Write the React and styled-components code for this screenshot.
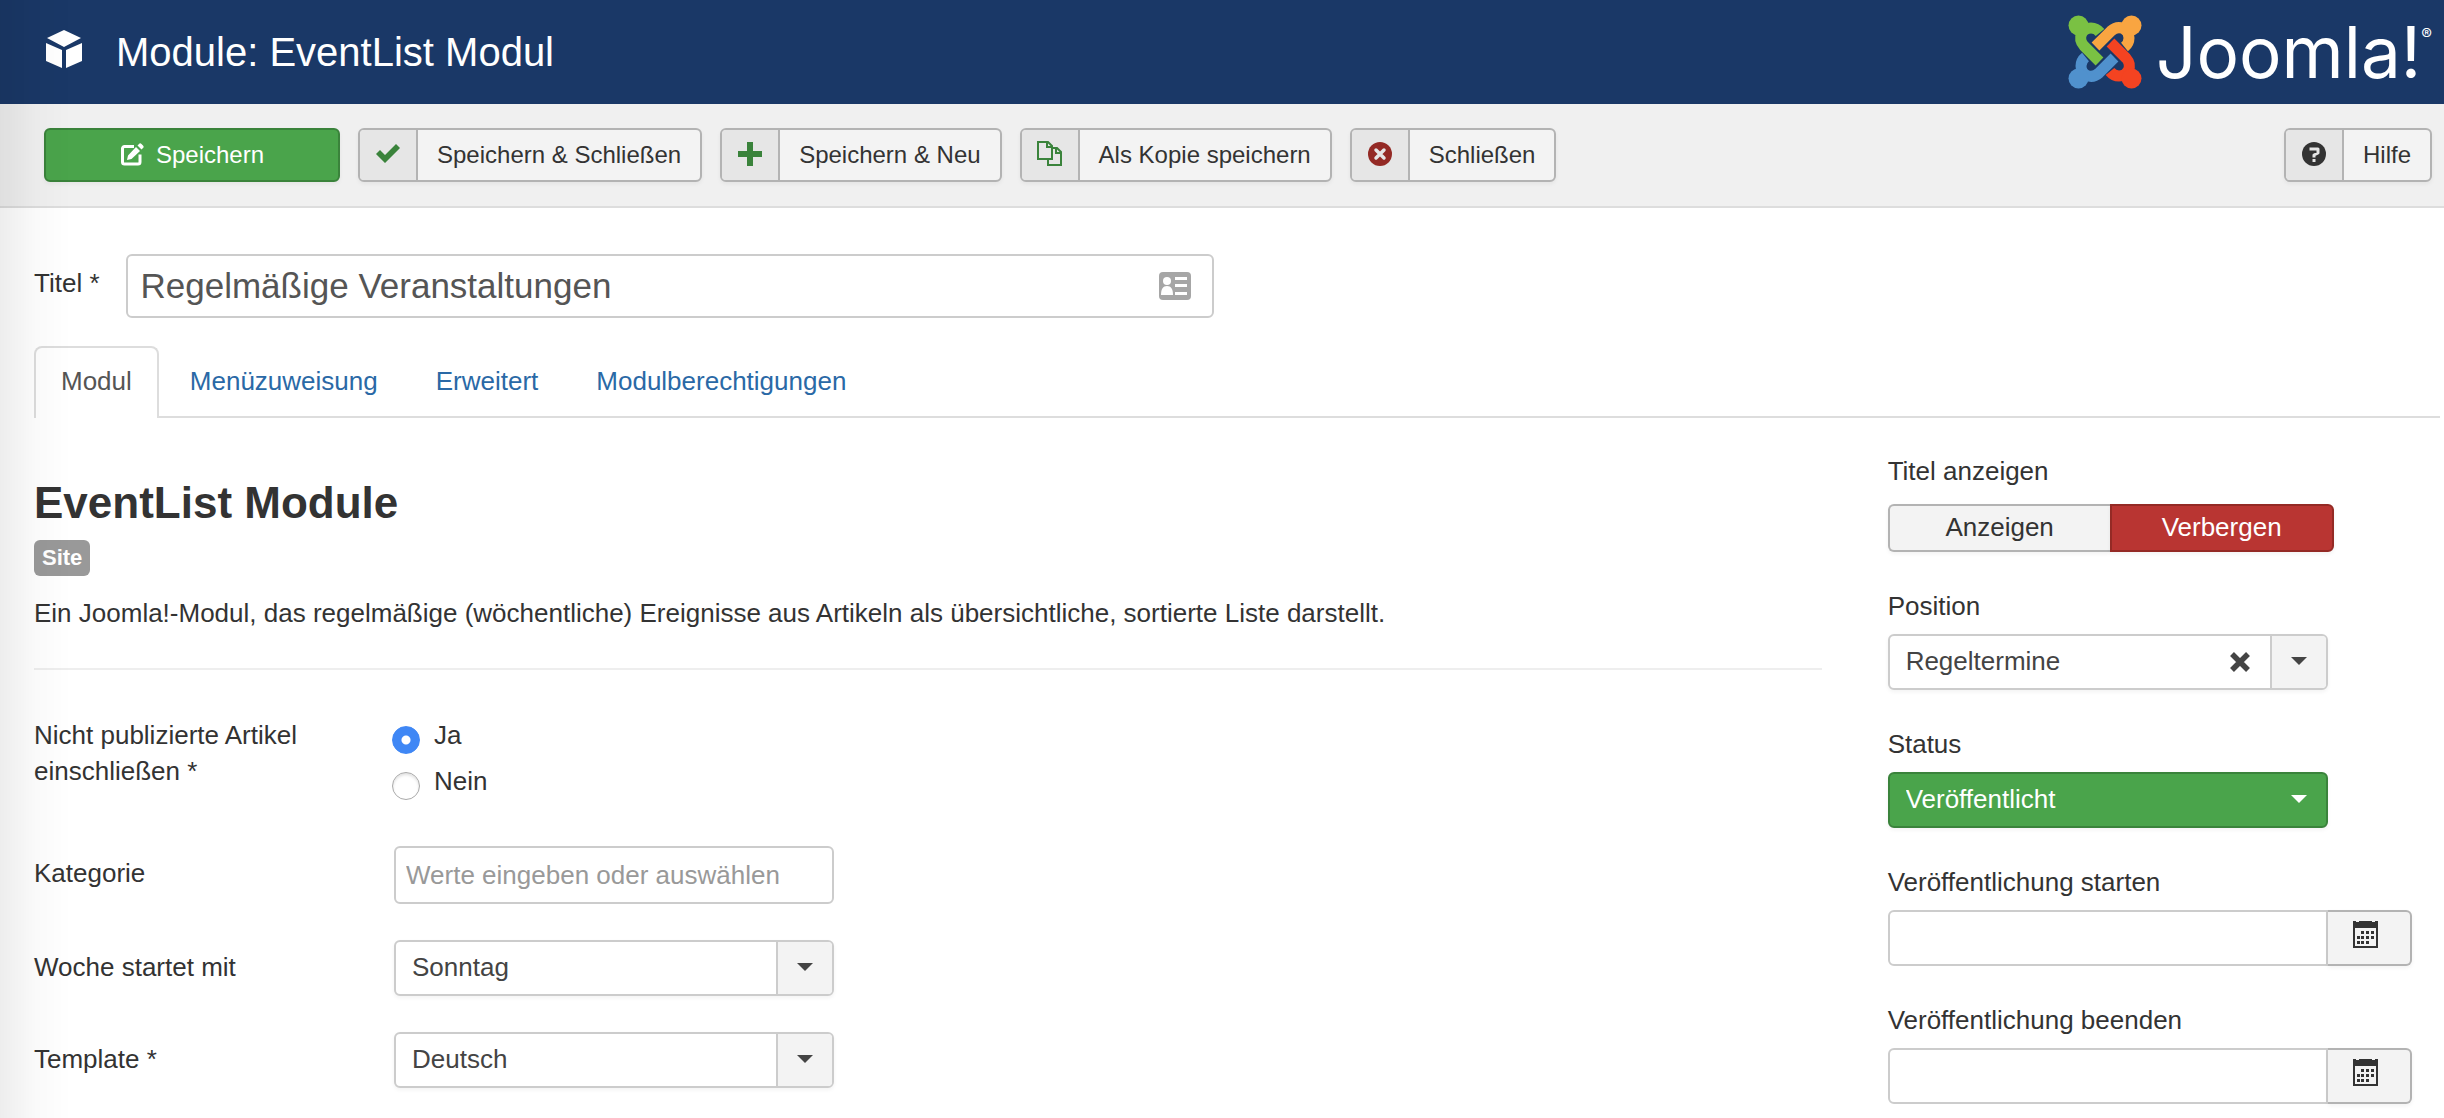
import React, { useState } from 'react'
import styled, { createGlobalStyle, css } from 'styled-components'

const colors = {
  header: '#1a3867',
  subhead: '#f0f0f0',
  text: '#333',
  muted: '#555',
  link: '#2a69a6',
  border: '#ccc',
  buttonBorder: '#b3b3b3',
  button: '#f3f3f3',
  green: '#4aa44b',
  greenDark: '#3a833b',
  red: '#b93532',
  redDark: '#942a25',
}

const GlobalStyle = createGlobalStyle`
  * {
    box-sizing: border-box;
  }
  body {
    margin: 0;
    background: #fff;
    color: ${colors.text};
    font-family: "Liberation Sans", Arial, sans-serif;
    font-size: 26px;
    line-height: 36px;
  }
  button, input, select {
    margin: 0;
    font: inherit;
    color: inherit;
  }
`

const Page = styled.div`
  min-height: 100vh;
`

const EdgeShadow = styled.div`
  position: fixed;
  top: 0;
  bottom: 0;
  left: 0;
  width: 72px;
  background: linear-gradient(to right, rgba(0, 0, 0, 0.07), rgba(0, 0, 0, 0.02) 50%, rgba(0, 0, 0, 0));
  pointer-events: none;
`

const Header = styled.header`
  display: flex;
  align-items: center;
  height: 104px;
  padding: 0 12px 0 44px;
  background: ${colors.header};
  color: #fff;
`

const PageTitle = styled.h1`
  flex: 1;
  margin: 0 0 0 30px;
  font-size: 40px;
  font-weight: 400;
  line-height: 48px;
`

const Brand = styled.a`
  display: flex;
  align-items: center;
  gap: 14px;
  color: #fff;
  text-decoration: none;
`

const Wordmark = styled.span`
  display: flex;
  font-family: Inter, sans-serif;
  font-size: 71px;
  line-height: 72px;
`

const Registered = styled.sup`
  font-size: 16px;
  line-height: 36px;
`

const Toolbar = styled.div`
  display: flex;
  gap: 18px;
  padding: 24px 12px 24px 44px;
  background: ${colors.subhead};
  border-bottom: 2px solid #ddd;
`

const ToolButton = styled.button`
  display: flex;
  align-items: stretch;
  height: 54px;
  padding: 0;
  overflow: hidden;
  border: 2px solid ${colors.buttonBorder};
  border-radius: 6px;
  background: ${colors.button};
  box-shadow: 0 2px 4px rgba(0, 0, 0, 0.05);
  font-size: 24px;
  cursor: pointer;
  ${props => props.$end && css`
    margin-left: auto;
  `}
`

const SaveButton = styled(ToolButton)`
  align-items: center;
  justify-content: center;
  gap: 12px;
  width: 296px;
  border-color: ${colors.greenDark};
  background: ${colors.green};
  color: #fff;
`

const IconWell = styled.span`
  display: flex;
  align-items: center;
  justify-content: center;
  width: 58px;
  padding-bottom: 2px;
  border-right: 2px solid ${colors.buttonBorder};
  background: #e6e6e6;
`

const ToolLabel = styled.span`
  padding: 7px 19px;
`

const Content = styled.main`
  padding: 46px 4px 14px 34px;
`

const TitleRow = styled.div`
  display: flex;
  align-items: center;
  gap: 26px;
  margin-bottom: 28px;
`

const TitleLabel = styled.label`
  padding-bottom: 6px;
`

const TitleField = styled.div`
  display: grid;
  align-items: center;
  flex: 0 1 1088px;
`

const TitleInput = styled.input`
  grid-area: 1 / 1;
  width: 100%;
  height: 64px;
  padding: 0 72px 0 13px;
  border: 2px solid ${colors.border};
  border-radius: 6px;
  background: #fff;
  color: ${colors.muted};
  font-size: 35px;
`

const CardSlot = styled.span`
  grid-area: 1 / 1;
  display: flex;
  justify-self: end;
  margin-right: 22px;
`

const Tabs = styled.nav`
  display: flex;
  gap: 4px;
  border-bottom: 2px solid #ddd;
`

const Tab = styled.a`
  height: 70px;
  padding: 15px 25px 0;
  border: 2px solid transparent;
  border-bottom: 0;
  color: ${colors.link};
  text-decoration: none;
  ${props => props.$active && css`
    height: 72px;
    margin-bottom: -2px;
    border-color: #ddd;
    border-radius: 8px 8px 0 0;
    background: #fff;
    color: ${colors.muted};
  `}
`

const Columns = styled.div`
  display: grid;
  grid-template-columns: minmax(0, 1fr) 23%;
  gap: 65px;
  padding-top: 35px;
`

const ModuleName = styled.h2`
  margin: 21px 0 8px;
  font-size: 44px;
  line-height: 58px;
`

const Badge = styled.span`
  display: inline-block;
  padding: 0 8px;
  border-radius: 6px;
  background: #999;
  color: #fff;
  font-size: 22px;
  font-weight: 700;
  vertical-align: top;
`

const Description = styled.p`
  margin: 19px 0 37px;
`

const Divider = styled.hr`
  margin: 0 0 47px;
  border: 0;
  border-top: 2px solid #eee;
`

const Field = styled.div`
  display: grid;
  grid-template-columns: 360px 440px;
  align-items: start;
  margin-bottom: 36px;
`

const FieldLabel = styled.label`
  max-width: 320px;
  padding-top: ${props => props.$flush ? '0' : '9px'};
`

const RadioGroup = styled.div`
  display: flex;
  flex-direction: column;
  gap: 10px;
  margin-bottom: 11px;
`

const RadioLabel = styled.label`
  display: flex;
  gap: 14px;
  height: 36px;
`

const Radio = styled.input.attrs({ type: 'radio' })`
  appearance: none;
  width: 28px;
  height: 28px;
  margin: 9px 0 0 -2px;
  border: 1px solid #aaa;
  border-radius: 50%;
  background: #fff;
  box-shadow: inset 0 2px 3px rgba(0, 0, 0, 0.12);
  &:checked {
    border-color: #3f87f5;
    background: radial-gradient(circle, #fff 0 4px, #3f87f5 5px);
    box-shadow: none;
  }
`

const TextInput = styled.input`
  width: 100%;
  height: ${props => props.$tall ? '58px' : '56px'};
  padding: 0 10px;
  border: 2px solid ${colors.border};
  border-radius: 6px;
  background: #fff;
  &::placeholder {
    color: #999;
    opacity: 1;
  }
`

const SelectBox = styled.div`
  display: grid;
  grid-template-columns: minmax(0, 1fr) auto auto;
  height: 56px;
  overflow: hidden;
  border: 2px solid ${props => props.$green ? colors.greenDark : colors.border};
  border-radius: 6px;
  background: ${props => props.$green ? colors.green : '#fff'};
  color: ${props => props.$green ? '#fff' : '#444'};
  box-shadow: 0 2px 4px rgba(0, 0, 0, 0.05);
`

const NativeSelect = styled.select`
  grid-area: 1 / 1 / 2 / 4;
  appearance: none;
  padding: 0 16px 2px;
  border: 0;
  background: transparent;
  cursor: pointer;
`

const ClearButton = styled.button`
  grid-area: 1 / 2;
  display: flex;
  align-items: center;
  padding: 0 20px;
  border: 0;
  background: none;
`

const ArrowCell = styled.span`
  grid-area: 1 / 3;
  display: flex;
  align-items: center;
  justify-content: center;
  width: 56px;
  padding-bottom: 2px;
  border-left: 2px solid ${props => props.$green ? 'transparent' : colors.border};
  background: ${props => props.$green ? 'transparent' : colors.button};
  pointer-events: none;
`

const Sidebar = styled.aside`
  display: flex;
  flex-direction: column;
  gap: 36px;
  padding-left: 1px;
`

const SideField = styled.div`
  display: flex;
  flex-direction: column;
  gap: 11px;
  width: ${props => props.$wide ? '524px' : '440px'};
  max-width: 100%;
`

const SideLabel = styled.label`
  display: block;
  height: 35px;
`

const Toggle = styled.div`
  display: flex;
  width: 446px;
  margin-top: 5px;
`

const ToggleButton = styled.button`
  flex: 1;
  height: 48px;
  padding: 0 0 2px;
  border: 2px solid ${colors.buttonBorder};
  background: ${colors.button};
  box-shadow: 0 2px 4px rgba(0, 0, 0, 0.05);
  cursor: pointer;
  &:first-child {
    border-right-width: 0;
    border-radius: 6px 0 0 6px;
  }
  &:last-child {
    border-radius: 0 6px 6px 0;
  }
  ${props => props.$active && css`
    border-color: ${colors.redDark};
    background: ${colors.red};
    color: #fff;
  `}
`

const DateRow = styled.div`
  display: flex;
`

const DateInput = styled(TextInput)`
  flex: 1;
  min-width: 0;
  border-radius: 6px 0 0 6px;
`

const DateButton = styled.button`
  display: flex;
  justify-content: center;
  width: 84px;
  padding: 8px 6px 0 0;
  border: 2px solid ${colors.buttonBorder};
  border-left: 0;
  border-radius: 0 6px 6px 0;
  background: ${colors.button};
  box-shadow: 0 2px 4px rgba(0, 0, 0, 0.05);
`

const CubeIcon = () => (
  <svg width="42" height="44" viewBox="0 0 42 44" fill="#fff" aria-hidden="true">
    <path d="M20 0 37 8 20 17 3 8ZM2 13 18 20v18L2 31ZM38 13 22 20v18l16-7Z"/>
  </svg>
)

const EditIcon = () => (
  <svg width="24" height="24" viewBox="0 0 24 24" aria-hidden="true">
    <path d="M14 3.500H4.500a2 2 0 0 0-2 2V19a2 2 0 0 0 2 2H18a2 2 0 0 0 2-2v-7.500" fill="none" stroke="#fff" strokeWidth="3"/>
    <path d="M7 17l1-4.500L16 4l4 4-8.500 8ZM17.500 2.500l2-2q1-.5 2 .5l1.500 1.500q1 1 .5 2l-2 2Z" fill="#fff"/>
  </svg>
)

const CheckIcon = () => (
  <svg width="24" height="24" viewBox="0 0 24 24" aria-hidden="true">
    <path d="M0 12l4-4 5 5L20 2l4 4L9 21Z" fill={colors.greenDark}/>
  </svg>
)

const PlusIcon = () => (
  <svg width="24" height="24" viewBox="0 0 24 24" aria-hidden="true">
    <path d="M9 0h6v9h9v6h-9v9H9v-9H0V9h9Z" fill={colors.greenDark}/>
  </svg>
)

const CopyIcon = () => (
  <svg width="26" height="26" viewBox="0 0 26 26" stroke={colors.greenDark} strokeWidth="2" aria-hidden="true">
    <path d="M11 7h9l4 4v13H11Z" fill="none"/>
    <path d="M19 7v5h5" fill="none"/>
    <path d="M1 1h10l4 4v13H1Z" fill="#e6e6e6"/>
    <path d="M10 1v5h5" fill="none"/>
  </svg>
)

const CancelIcon = () => (
  <svg width="24" height="24" viewBox="0 0 24 24" aria-hidden="true">
    <circle cx="12" cy="12" r="12" fill={colors.redDark}/>
    <path d="M8 8l8 8M16 8l-8 8" stroke="#e6e6e6" strokeWidth="3.500" strokeLinecap="round"/>
  </svg>
)

const HelpIcon = () => (
  <svg width="24" height="24" viewBox="0 0 24 24" aria-hidden="true">
    <circle cx="12" cy="12" r="12" fill={colors.text}/>
    <path d="M7.500 7H16v4l-4 2v2.500" fill="none" stroke="#e6e6e6" strokeWidth="3" strokeLinejoin="round"/>
    <path d="M10.500 17h3v3h-3Z" fill="#e6e6e6"/>
  </svg>
)

const CardIcon = () => (
  <svg width="34" height="28" viewBox="0 0 34 28" aria-hidden="true">
    <rect x="1" width="32" height="28" rx="4" fill="#a6a6a6"/>
    <circle cx="9" cy="9" r="4" fill="#fff"/>
    <path d="M3 23c0-6 2-9 6-9s6 3 6 9ZM17 5h12v3H17ZM17 12h12v3H17ZM17 20h12v3H17Z" fill="#fff"/>
  </svg>
)

const CalendarIcon = () => (
  <svg width="26" height="28" viewBox="0 0 26 28" fill={colors.text} aria-hidden="true">
    <path d="M0 1h3v1h3V1h13v1h3V1h3v27H0ZM2 8v18h21V8Z" fillRule="evenodd"/>
    <path d="M8 11h3v3H8ZM13 11h3v3h-3ZM18 11h3v3h-3ZM4 16h3v3H4ZM8 16h3v3H8ZM13 16h3v3h-3ZM18 16h3v3h-3ZM4 21h3v3H4ZM8 21h3v3H8ZM13 21h3v3h-3Z"/>
  </svg>
)

const ClearIcon = () => (
  <svg width="20" height="20" viewBox="0 0 20 20" aria-hidden="true">
    <path d="M2 2l16 16M18 2 2 18" stroke="#444" strokeWidth="5.500"/>
  </svg>
)

const Caret = () => (
  <svg width="16" height="8" viewBox="0 0 16 8" fill="currentColor" aria-hidden="true">
    <path d="M0 0h16L8 8Z"/>
  </svg>
)

// one arm, turned a quarter for each colour
const arms = [
  { color: '#7ac143', angle: 0 },
  { color: '#f9a541', angle: 90 },
  { color: '#f44321', angle: 180 },
  { color: '#5091cd', angle: 270 },
]

const JoomlaMark = () => (
  <svg width="74" height="74" viewBox="0 0 74 74" aria-hidden="true">
    { arms.map(({ color, angle }) => (
      <g key={color} transform={`rotate(${angle} 37 37)`}>
        <path d="M31.500 46.500 16 31C9 23 14 13 23 13c4 0 7 2 9 4.500" fill="none" stroke={color} strokeWidth="11"/>
        <circle cx="10.500" cy="10.500" r="10" fill={color}/>
      </g>
    )) }
  </svg>
)

const tools = [
  { label: 'Speichern & Schließen', Icon: CheckIcon },
  { label: 'Speichern & Neu', Icon: PlusIcon },
  { label: 'Als Kopie speichern', Icon: CopyIcon },
  { label: 'Schließen', Icon: CancelIcon },
  { label: 'Hilfe', Icon: HelpIcon, end: true },
]

const tabs = ['Modul', 'Menüzuweisung', 'Erweitert', 'Modulberechtigungen']

const Select = ({ id, value, green, onClear }) => (
  <SelectBox $green={green}>
    <NativeSelect id={id} defaultValue={value}>
      <option>{value}</option>
    </NativeSelect>
    { onClear && <ClearButton type="button" aria-label="Auswahl entfernen"><ClearIcon/></ClearButton> }
    <ArrowCell $green={green}><Caret/></ArrowCell>
  </SelectBox>
)

const DateField = ({ id, label }) => (
  <SideField $wide>
    <SideLabel htmlFor={id}>{label}</SideLabel>
    <DateRow>
      <DateInput id={id} type="text"/>
      <DateButton type="button" aria-label="Kalender öffnen"><CalendarIcon/></DateButton>
    </DateRow>
  </SideField>
)

const App = () => {
  const [activeTab, setActiveTab] = useState('Modul')
  const [showTitle, setShowTitle] = useState(false)

  return (
    <Page>
      <GlobalStyle/>
      <Header>
        <CubeIcon/>
        <PageTitle>Module: EventList Modul</PageTitle>
        <Brand href="#">
          <JoomlaMark/>
          <Wordmark>Joomla!<Registered>®</Registered></Wordmark>
        </Brand>
      </Header>
      <Toolbar>
        <SaveButton type="button"><EditIcon/>Speichern</SaveButton>
        { tools.map(({ label, Icon, end }) => (
          <ToolButton key={label} type="button" $end={end}>
            <IconWell><Icon/></IconWell>
            <ToolLabel>{label}</ToolLabel>
          </ToolButton>
        )) }
      </Toolbar>
      <Content>
        <TitleRow>
          <TitleLabel htmlFor="title">Titel *</TitleLabel>
          <TitleField>
            <TitleInput id="title" type="text" defaultValue="Regelmäßige Veranstaltungen"/>
            <CardSlot><CardIcon/></CardSlot>
          </TitleField>
        </TitleRow>
        <Tabs>
          { tabs.map(tab => (
            <Tab key={tab} href="#" $active={tab === activeTab} onClick={() => setActiveTab(tab)}>{tab}</Tab>
          )) }
        </Tabs>
        <Columns>
          <section>
            <ModuleName>EventList Module</ModuleName>
            <Badge>Site</Badge>
            <Description>
              Ein Joomla!-Modul, das regelmäßige (wöchentliche) Ereignisse aus Artikeln als übersichtliche, sortierte Liste darstellt.
            </Description>
            <Divider/>
            <Field role="radiogroup" aria-labelledby="unpublished">
              <FieldLabel as="span" id="unpublished" $flush>Nicht publizierte Artikel einschließen *</FieldLabel>
              <RadioGroup>
                <RadioLabel><Radio name="unpublished" defaultChecked/>Ja</RadioLabel>
                <RadioLabel><Radio name="unpublished"/>Nein</RadioLabel>
              </RadioGroup>
            </Field>
            <Field>
              <FieldLabel htmlFor="category">Kategorie</FieldLabel>
              <TextInput id="category" type="text" placeholder="Werte eingeben oder auswählen" $tall/>
            </Field>
            <Field>
              <FieldLabel htmlFor="week">Woche startet mit</FieldLabel>
              <Select id="week" value="Sonntag"/>
            </Field>
            <Field>
              <FieldLabel htmlFor="template">Template *</FieldLabel>
              <Select id="template" value="Deutsch"/>
            </Field>
          </section>
          <Sidebar>
            <SideField>
              <SideLabel as="span" id="show-title">Titel anzeigen</SideLabel>
              <Toggle role="group" aria-labelledby="show-title">
                <ToggleButton type="button" $active={showTitle} onClick={() => setShowTitle(true)}>Anzeigen</ToggleButton>
                <ToggleButton type="button" $active={!showTitle} onClick={() => setShowTitle(false)}>Verbergen</ToggleButton>
              </Toggle>
            </SideField>
            <SideField>
              <SideLabel htmlFor="position">Position</SideLabel>
              <Select id="position" value="Regeltermine" onClear={() => {}}/>
            </SideField>
            <SideField>
              <SideLabel htmlFor="status">Status</SideLabel>
              <Select id="status" value="Veröffentlicht" green/>
            </SideField>
            <DateField id="publish-up" label="Veröffentlichung starten"/>
            <DateField id="publish-down" label="Veröffentlichung beenden"/>
          </Sidebar>
        </Columns>
      </Content>
      <EdgeShadow/>
    </Page>
  )
}

export default App
